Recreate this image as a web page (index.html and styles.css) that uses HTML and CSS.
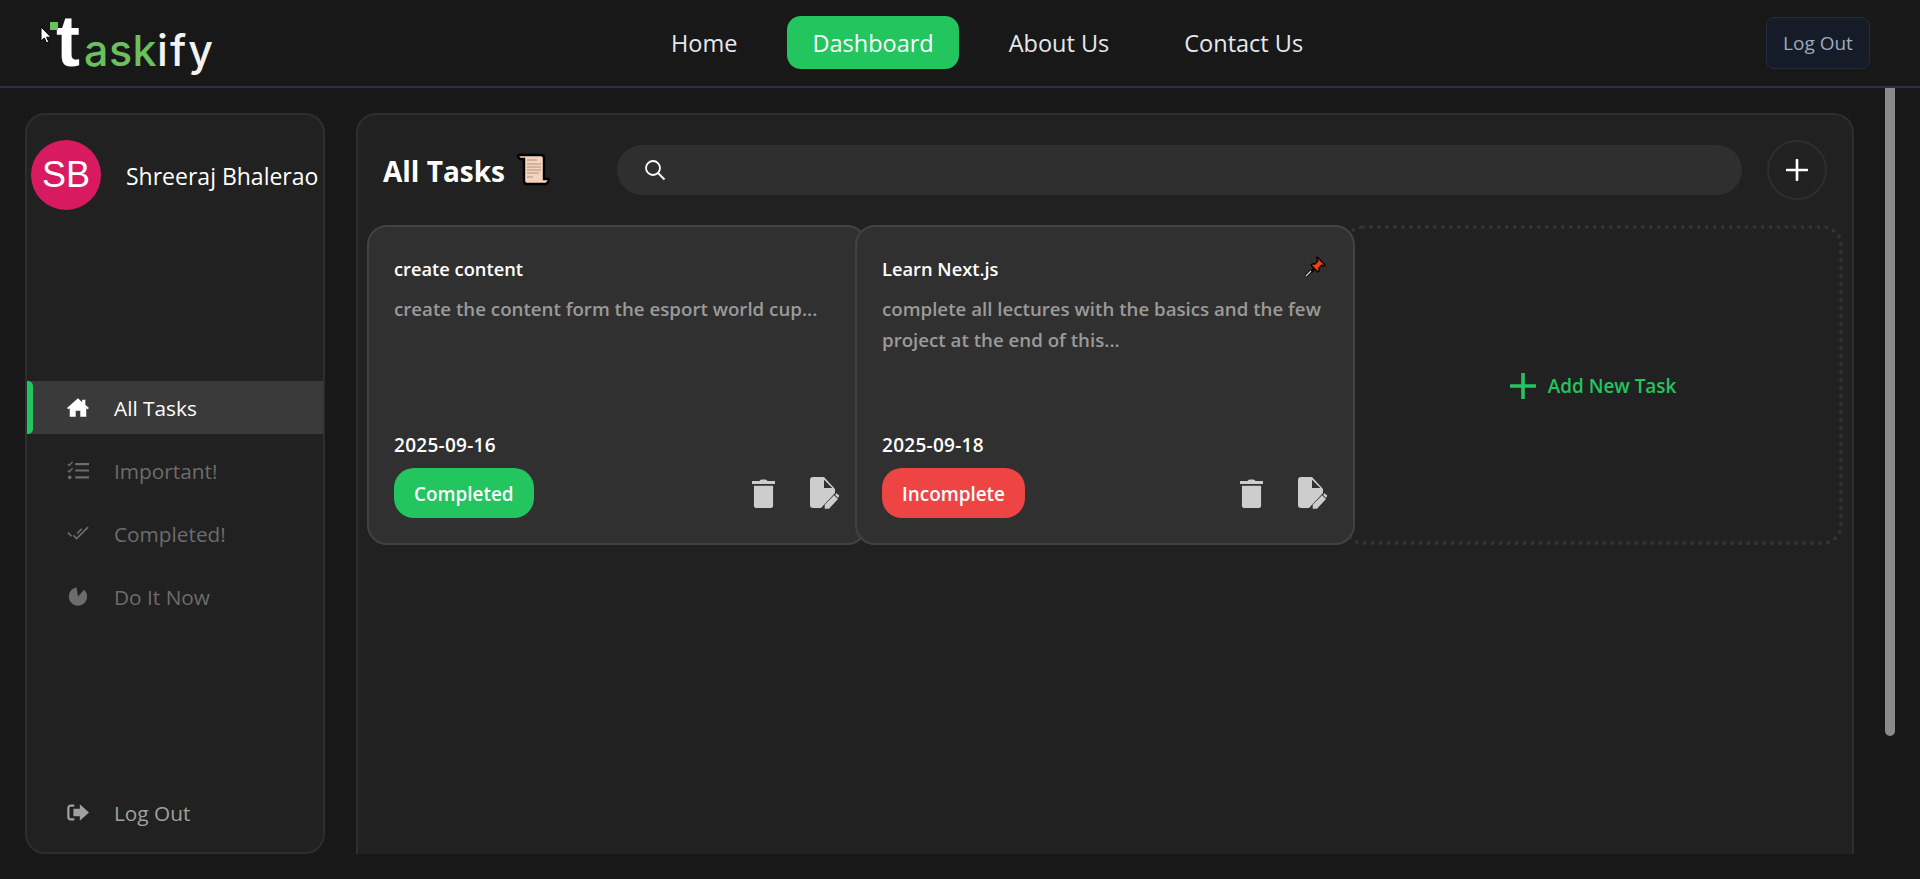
FILE: index.html
```html
<!DOCTYPE html>
<html lang="en">
<head>
<meta charset="utf-8">
<title>Taskify</title>
<link rel="stylesheet" href="styles.css">
</head>
<body>
<header class="topbar">
  <a class="logo"><span class="logo-dot"></span><span class="logo-t">t</span><span class="logo-green">ask</span><span class="logo-white">ify</span></a>
  <nav class="topnav">
    <a class="topnav-link">Home</a>
    <a class="topnav-link topnav-active">Dashboard</a>
    <a class="topnav-link">About Us</a>
    <a class="topnav-link">Contact Us</a>
  </nav>
  <button class="top-logout">Log Out</button>
</header>
<svg class="cursor" width="13" height="19" viewBox="0 0 13 19"><path d="M1 1v14l3.400-3 2.200 5 2.200-1-2.200-4.800h4.400z" fill="#fff" stroke="#000" stroke-width="1"/></svg>
<div class="scrollbar"></div>
<main class="layout">
  <aside class="sidebar">
    <div class="profile">
      <div class="avatar">SB</div>
      <div class="profile-name">Shreeraj Bhalerao</div>
    </div>
    <ul class="menu">
      <li class="menu-item menu-active">
        <svg class="menu-icon" viewBox="0 0 24 20"><path d="M12 0 0 10.500 1.500 12 3 10.800V20h6.500v-6.500h5V20H21v-9.200l1.500 1.200 1.500-1.500-4-3.500V1.500h-3.500v2.700z" fill="currentColor"/></svg>
        <span>All Tasks</span>
      </li>
      <li class="menu-item">
        <svg class="menu-icon" viewBox="0 0 24 20"><path d="M1 3l1.500 1.500L6 .5M1 10l1.500 1.500L6 7.500" fill="none" stroke="currentColor" stroke-width="1.500"/><circle cx="3" cy="17.500" r="2" fill="currentColor"/><path d="M9 3h15M9 10h15M9 17.500h15" stroke="currentColor" stroke-width="2.400"/></svg>
        <span>Important!</span>
      </li>
      <li class="menu-item">
        <svg class="menu-icon" viewBox="0 0 24 20"><path d="M1 9l4 4M7 12l3.500 3.500L23 3M11 10l5-5" fill="none" stroke="currentColor" stroke-width="1.800"/></svg>
        <span>Completed!</span>
      </li>
      <li class="menu-item">
        <svg class="menu-icon" viewBox="0 0 24 20"><path d="M12 10 10.400.100A10 10 0 1 0 18.600 2.500z" fill="currentColor"/></svg>
        <span>Do It Now</span>
      </li>
    </ul>
    <div class="menu-item menu-logout">
      <svg class="menu-icon" viewBox="0 0 24 20"><path d="M8 2.500H4A2.500 2.500 0 0 0 1.500 5v10A2.500 2.500 0 0 0 4 17.500h4" fill="none" stroke="currentColor" stroke-width="2.400"/><path d="M14 1l10 9-10 9v-5H7V6h7z" fill="currentColor"/></svg>
      <span>Log Out</span>
    </div>
  </aside>
  <section class="panel">
    <div class="panel-head">
      <h1 class="panel-title">All Tasks</h1>
      <svg class="scroll-emoji" width="34" height="34" viewBox="0 0 34 34"><path d="M3 2h22c2 0 3 1 3 3v21h4c1 0 1 2 0 3l-2 2H11c-2 0-3-1-3-3V6H5C3 6 1 3 3 2z" fill="#f6d3bd" stroke="#000" stroke-width="2.400"/><path d="M11 7h10M11 11h14M11 14h14M11 17h14M11 20h12M11 24h6" stroke="#c9a78f" stroke-width="1.300"/></svg>
      <div class="search">
        <svg width="22" height="22" viewBox="0 0 22 22"><circle cx="9" cy="9" r="7" fill="none" stroke="#fff" stroke-width="1.800"/><path d="M14 14l6.500 6.500" stroke="#fff" stroke-width="2"/></svg>
      </div>
      <button class="add-round"><svg width="22" height="22" viewBox="0 0 22 22"><path d="M11 1v20M1 11h20" stroke="#fff" stroke-width="2.600" stroke-linecap="round"/></svg></button>
    </div>
    <div class="cards">
      <article class="card">
        <h2 class="card-title">create content</h2>
        <p class="card-desc">create the content form the esport world cup...</p>
        <div class="card-foot">
          <div class="card-date">2025-09-16</div>
          <div class="card-actions">
            <span class="pill pill-green">Completed</span>
            <span class="card-icons">
              <svg class="trash" viewBox="0 0 24 30"><path d="M8 2c0-2 8-2 8 0h8v3H0V2zM2 7h20v21c0 1-1 2-2 2H4c-1 0-2-1-2-2z" fill="currentColor"/></svg>
              <svg class="edit" viewBox="0 0 30 32"><path fill-rule="evenodd" d="M3 0H14L25 12V16L11 31H3Q0 31 0 28V3Q0 0 3 0ZM14 2.700 22.300 11H14Z" fill="currentColor"/><path d="M14.700 31.700V27.700L24 18.300 28 22 19 31.700ZM25 17.700 26.700 16.300 29.300 18.700 28 21Z" fill="currentColor"/></svg>
            </span>
          </div>
        </div>
      </article>
      <article class="card">
        <svg class="pin" width="22" height="22" viewBox="0 0 22 22"><path d="M13 1l8 8-2 1-1-1-3 3 0 3-1 1-3-3-3 3-1-1 3-3-3-3 1-1 3 0 3-3-1-1z" fill="#f4400f" stroke="#000" stroke-width="1.300" stroke-linejoin="round"/><path d="M2 20l5-5" stroke="#000" stroke-width="3"/><path d="M2 20l5-5" stroke="#ddd" stroke-width="1.300"/></svg>
        <h2 class="card-title">Learn Next.js</h2>
        <p class="card-desc">complete all lectures with the basics and the few project at the end of this...</p>
        <div class="card-foot">
          <div class="card-date">2025-09-18</div>
          <div class="card-actions">
            <span class="pill pill-red">Incomplete</span>
            <span class="card-icons">
              <svg class="trash" viewBox="0 0 24 30"><path d="M8 2c0-2 8-2 8 0h8v3H0V2zM2 7h20v21c0 1-1 2-2 2H4c-1 0-2-1-2-2z" fill="currentColor"/></svg>
              <svg class="edit" viewBox="0 0 30 32"><path fill-rule="evenodd" d="M3 0H14L25 12V16L11 31H3Q0 31 0 28V3Q0 0 3 0ZM14 2.700 22.300 11H14Z" fill="currentColor"/><path d="M14.700 31.700V27.700L24 18.300 28 22 19 31.700ZM25 17.700 26.700 16.300 29.300 18.700 28 21Z" fill="currentColor"/></svg>
            </span>
          </div>
        </div>
      </article>
      <article class="card-new">
        <svg width="26" height="26" viewBox="0 0 26 26"><path d="M13 1v24M1 13h24" stroke="#22c55e" stroke-width="3.600" stroke-linecap="round"/></svg>
        <span>Add New Task</span>
      </article>
    </div>
  </section>
</main>
</body>
</html>
```
FILE: styles.css
```css
* { box-sizing: border-box; }
html, body { margin: 0; height: 100%; }
body {
  height: 879px;
  overflow: hidden;
  background: #181818;
  color: #fff;
  font-family: "Open Sans", "Noto Sans", sans-serif;
  position: relative;
}
.topbar {
  height: 88px;
  border-bottom: 2px solid #2d3145;
  display: flex;
  align-items: center;
  position: relative;
}
.logo {
  width: 300px;
  height: 86px;
  padding: 0 0 0 56px;
  display: flex;
  align-items: baseline;
  position: relative;
  font-family: "Inter", sans-serif;
  font-weight: 500;
  font-size: 43px;
  line-height: 82px;
  letter-spacing: 0.500px;
}
.logo-dot {
  position: absolute;
  left: 50px;
  top: 22px;
  width: 8px;
  height: 8px;
  background: #6abf5f;
}
.logo-t {
  font-family: "Liberation Sans", sans-serif;
  font-size: 72px;
  font-weight: 700;
  color: #fff;
  margin-right: 4px;
  letter-spacing: 0;
}
.logo-green { color: #6abf5f; }
.logo-white { color: #f2f2f2; letter-spacing: 2px; }
.topnav {
  position: absolute;
  left: 646px;
  top: 16px;
  display: flex;
  align-items: center;
  gap: 25px;
}
.topnav-link {
  height: 53px;
  padding: 0 25px;
  display: flex;
  align-items: center;
  font-size: 23.500px;
  color: #e6e8ee;
  border-radius: 14px;
}
.topnav-active { background: #22c55e; color: #fff; }
.top-logout {
  position: absolute;
  left: 1766px;
  top: 17px;
  width: 104px;
  height: 52px;
  background: #151b27;
  border: 1px solid #252b3b;
  border-radius: 8px;
  color: #9ca9bd;
  font-family: inherit;
  font-size: 19px;
  padding: 0;
}
.cursor { position: absolute; left: 40px; top: 26px; }
.scrollbar {
  position: absolute;
  left: 1885px;
  top: 88px;
  width: 10px;
  height: 648px;
  background: #8a8a8a;
  border-radius: 0 0 5px 5px;
}
.layout {
  display: flex;
  gap: 31px;
  padding: 25px 0 0 25px;
  height: 766px;
}
.sidebar {
  width: 300px;
  height: 741px;
  flex: none;
  background: #212121;
  border: 2px solid #2e2e2e;
  border-radius: 20px;
  display: flex;
  flex-direction: column;
  padding: 25px 0 0;
}
.profile {
  display: flex;
  align-items: center;
  gap: 25px;
  padding-left: 4px;
  height: 70px;
}
.avatar {
  width: 70px;
  height: 70px;
  border-radius: 50%;
  background: #d81b60;
  display: flex;
  align-items: center;
  justify-content: center;
  font-family: "Liberation Sans", sans-serif;
  font-size: 36px;
  flex: none;
}
.profile-name { font-size: 23px; white-space: nowrap; padding-top: 1px; }
.menu {
  list-style: none;
  margin: 171px 0 0;
  padding: 0;
  display: flex;
  flex-direction: column;
  gap: 10px;
}
.menu-item {
  height: 53px;
  display: flex;
  align-items: center;
  gap: 25px;
  padding-left: 40px;
  font-size: 20.800px;
  color: #6c6c6c;
  position: relative;
}
.menu-icon { width: 22px; height: 19px; flex: none; }
.menu-active { background: #3a3a3a; color: #fff; }
.menu-active::before {
  content: "";
  position: absolute;
  left: 0;
  top: 0;
  bottom: 0;
  width: 6px;
  background: #22c55e;
  border-radius: 0 5px 5px 0;
}
.menu-logout { margin-top: auto; margin-bottom: 13px; color: #a0a0a0; }
.panel {
  width: 1498px;
  height: 741px;
  flex: none;
  background: #212121;
  border: 2px solid #2e2e2e;
  border-bottom: 0;
  border-radius: 20px 20px 0 0;
  padding: 0 9px;
}
.panel-head {
  height: 110px;
  display: flex;
  align-items: center;
  padding: 0 0 0 16px;
}
.panel-title { margin: 0; font-size: 28px; font-weight: 700; width: 122px; white-space: nowrap; padding-top: 2px; }
.scroll-emoji { margin-left: 11px; flex: none; }
.search {
  margin-left: 67px;
  width: 1125px;
  height: 50px;
  border-radius: 25px;
  background: #2f2f2f;
  display: flex;
  align-items: center;
  padding-left: 27px;
}
.add-round {
  margin-left: 25px;
  width: 60px;
  height: 60px;
  border-radius: 50%;
  border: 2px solid #2e2e2e;
  background: transparent;
  display: flex;
  align-items: center;
  justify-content: center;
  padding: 0;
}
.cards {
  display: grid;
  grid-template-columns: repeat(3, 488px);
}
.card, .card-new {
  width: 500px;
  height: 320px;
  border-radius: 20px;
}
.card {
  position: relative;
  background: #303030;
  border: 2px solid #424242;
  padding: 29px 25px 0;
  display: flex;
  flex-direction: column;
}
.card-title { margin: 0; font-size: 18.300px; font-weight: 600; line-height: 26px; }
.card-desc {
  margin: 11px 0 0;
  font-size: 18.700px;
  font-weight: 600;
  line-height: 31px;
  color: #9a9a9a;
}
.card-foot { margin-top: auto; padding-bottom: 25px; }
.card-date { font-size: 19px; font-weight: 600; letter-spacing: 0.270px; line-height: 26px; margin-bottom: 10px; }
.card-actions { display: flex; align-items: center; justify-content: space-between; }
.pill {
  height: 50px;
  padding: 2px 20px 0;
  border-radius: 20px;
  display: flex;
  align-items: center;
  font-size: 18.900px;
  font-weight: 600;
}
.pill-green { background: #22c55e; }
.pill-red { background: #ef4444; }
.card-icons { display: flex; align-items: center; gap: 35px; color: #cdcdcd; }
.trash { width: 23px; height: 29px; }
.edit { width: 30px; height: 32px; }
.pin { position: absolute; right: 27px; top: 29px; }
.card-new {
  border: 4px dotted #333;
  display: flex;
  align-items: center;
  justify-content: center;
  gap: 12px;
  padding-top: 2px;
  color: #22c55e;
  font-size: 18.900px;
  font-weight: 600;
}
```
